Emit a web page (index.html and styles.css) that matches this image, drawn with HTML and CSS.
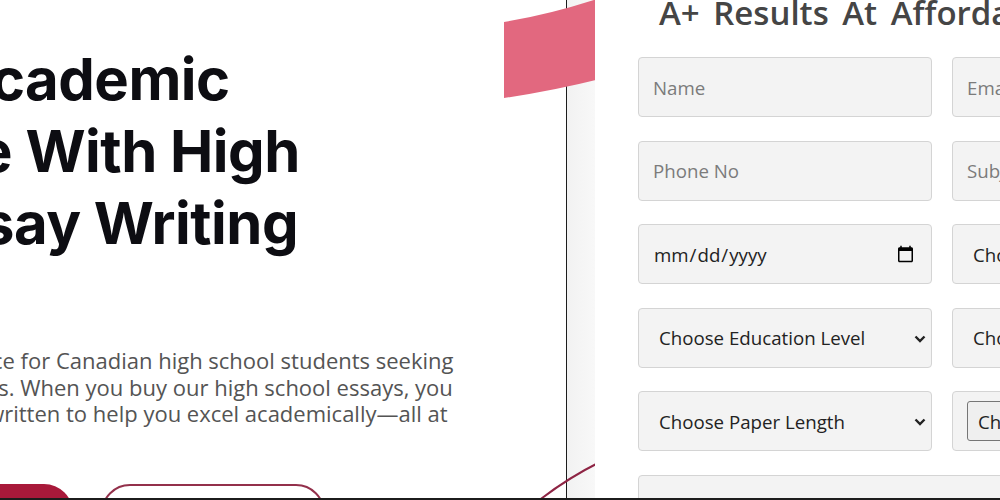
FILE: index.html
```html
<!DOCTYPE html>
<html lang="en">
<head>
    <meta charset="UTF-8">
    <meta name="viewport" content="width=device-width, initial-scale=1.0">
    <title>High School Essay Writing Service</title>
    <link rel="stylesheet" href="styles.css">
</head>
<body>
    <section class="hero">
        <div class="intro">
            <h1 class="intro-title">Achieve Academic<br>Excellence With High<br>School Essay Writing</h1>
            <p class="intro-text">Our website is the ideal choice for Canadian high school students seeking<br>expert help and better grades. When you buy our high school essays, you<br>get original, custom papers written to help you excel academically—all at<br>affordable prices.</p>
            <div class="intro-actions">
                <a href="#order" class="btn btn-primary">Order Now</a>
                <a href="#quote" class="btn btn-outline">Get a Free Quote</a>
            </div>
        </div>

        <div class="gutter"></div>

        <div class="order-card" id="order">
            <h2 class="order-title">A+ Results At Affordable Prices</h2>
            <form class="order-form">
                <input type="text" class="field" placeholder="Name">
                <input type="email" class="field" placeholder="Email">
                <input type="tel" class="field" placeholder="Phone No">
                <input type="text" class="field" placeholder="Subject">
                <input type="date" class="field field-date">
                <div class="select-wrap">
                    <select class="field field-select">
                        <option>Choose Paper Type</option>
                    </select>
                    <svg class="chevron" viewBox="0 0 12 8"><path d="M1.5 1.5 6 6l4.5-4.5" fill="none" stroke="#222" stroke-width="2.4"/></svg>
                </div>
                <div class="select-wrap">
                    <select class="field field-select">
                        <option>Choose Education Level</option>
                    </select>
                    <svg class="chevron" viewBox="0 0 12 8"><path d="M1.5 1.5 6 6l4.5-4.5" fill="none" stroke="#222" stroke-width="2.4"/></svg>
                </div>
                <div class="select-wrap">
                    <select class="field field-select">
                        <option>Choose Deadline</option>
                    </select>
                    <svg class="chevron" viewBox="0 0 12 8"><path d="M1.5 1.5 6 6l4.5-4.5" fill="none" stroke="#222" stroke-width="2.4"/></svg>
                </div>
                <div class="select-wrap">
                    <select class="field field-select">
                        <option>Choose Paper Length</option>
                    </select>
                    <svg class="chevron" viewBox="0 0 12 8"><path d="M1.5 1.5 6 6l4.5-4.5" fill="none" stroke="#222" stroke-width="2.4"/></svg>
                </div>
                <div class="field field-file">
                    <span class="file-button">Choose File</span>
                    <span class="file-name">No file chosen</span>
                </div>
                <textarea class="field field-wide" placeholder="Instructions"></textarea>
            </form>
        </div>

        <svg class="decor" width="1000" height="500" viewBox="0 0 1000 500">
            <path d="M504 22 Q552 14 600 -2 L600 79 Q552 91 504 98 Z" fill="#e2687f"/>
            <path d="M537 502 Q566 479 600 462" fill="none" stroke="#8e2444" stroke-width="2"/>
        </svg>
    </section>
</body>
</html>
```

FILE: styles.css
```css
body {
    margin: 0;
    background: #ffffff;
    overflow: hidden;
    font-family: "Open Sans", "Noto Sans", sans-serif;
}
.hero {
    position: relative;
    display: flex;
    height: 498px;
    width: 1000px;
    overflow: hidden;
    border-bottom: 2px solid #1c1c1c;
}
.intro {
    flex: 0 0 auto;
    width: 854px;
    margin-left: -288px;
    border-right: 1px solid #1c1c1c;
}
.intro-title {
    margin: 43px 0 0 -2px;
    font-family: Inter, "Liberation Sans", sans-serif;
    font-weight: 700;
    font-size: 58px;
    line-height: 72px;
    letter-spacing: -0.5px;
    color: #0d0d12;
    white-space: nowrap;
}
.intro-text {
    margin: 88px 0 0 -9px;
    font-size: 22px;
    line-height: 26.5px;
    color: #545454;
    white-space: nowrap;
}
.intro-actions {
    display: flex;
    gap: 28px;
    margin-top: 31px;
    padding-left: 151px;
}
.btn {
    display: inline-flex;
    align-items: center;
    justify-content: center;
    height: 58px;
    border-radius: 30px;
    font-size: 18px;
    font-weight: 600;
    text-decoration: none;
    box-sizing: border-box;
}
.btn-primary {
    width: 210px;
    background: #a8193a;
    color: #fff;
}
.btn-outline {
    width: 224px;
    border: 2px solid #93304b;
    color: #93304b;
}
.gutter {
    flex: 0 0 28px;
    background: linear-gradient(to right, #f2f2f2, #f8f8f8);
}
.order-card {
    position: relative;
    z-index: 1;
    flex: 0 0 auto;
    width: 700px;
    background: #fff;
    padding-left: 43px;
}
.order-title {
    margin: -9px 0 0 21px;
    font-family: "Open Sans", sans-serif;
    font-weight: 600;
    font-size: 33px;
    line-height: 44px;
    word-spacing: 5px;
    color: #454545;
    white-space: nowrap;
}
.order-form {
    display: grid;
    grid-template-columns: 294px 294px;
    column-gap: 20px;
    row-gap: 23.5px;
    margin-top: 22px;
}
.field {
    box-sizing: border-box;
    width: 100%;
    height: 60px;
    margin: 0;
    padding: 0 14px;
    background: #f3f3f3;
    border: 1px solid #d4d4d4;
    border-radius: 4px;
    font-family: "Open Sans", "Noto Sans", sans-serif;
    font-size: 18.7px;
    color: #222;
}
.field::placeholder {
    color: #7b7b7b;
}
.field-date {
    color: #222;
}
.select-wrap {
    position: relative;
}
.field-select {
    appearance: none;
    padding-left: 20px;
}
.chevron {
    position: absolute;
    right: 6px;
    top: 27px;
    width: 12px;
    height: 8px;
}
.field-file {
    display: flex;
    align-items: center;
    gap: 10px;
}
.file-button {
    display: inline-flex;
    align-items: center;
    height: 38px;
    padding: 0 10px;
    background: #efefef;
    border: 1px solid #767676;
    border-radius: 3px;
}
.file-name {
    color: #333;
}
.field-wide {
    grid-column: 1 / 3;
    height: 120px;
    padding-top: 15px;
    resize: none;
}
.decor {
    position: absolute;
    top: 0;
    left: 0;
    pointer-events: none;
}
```
